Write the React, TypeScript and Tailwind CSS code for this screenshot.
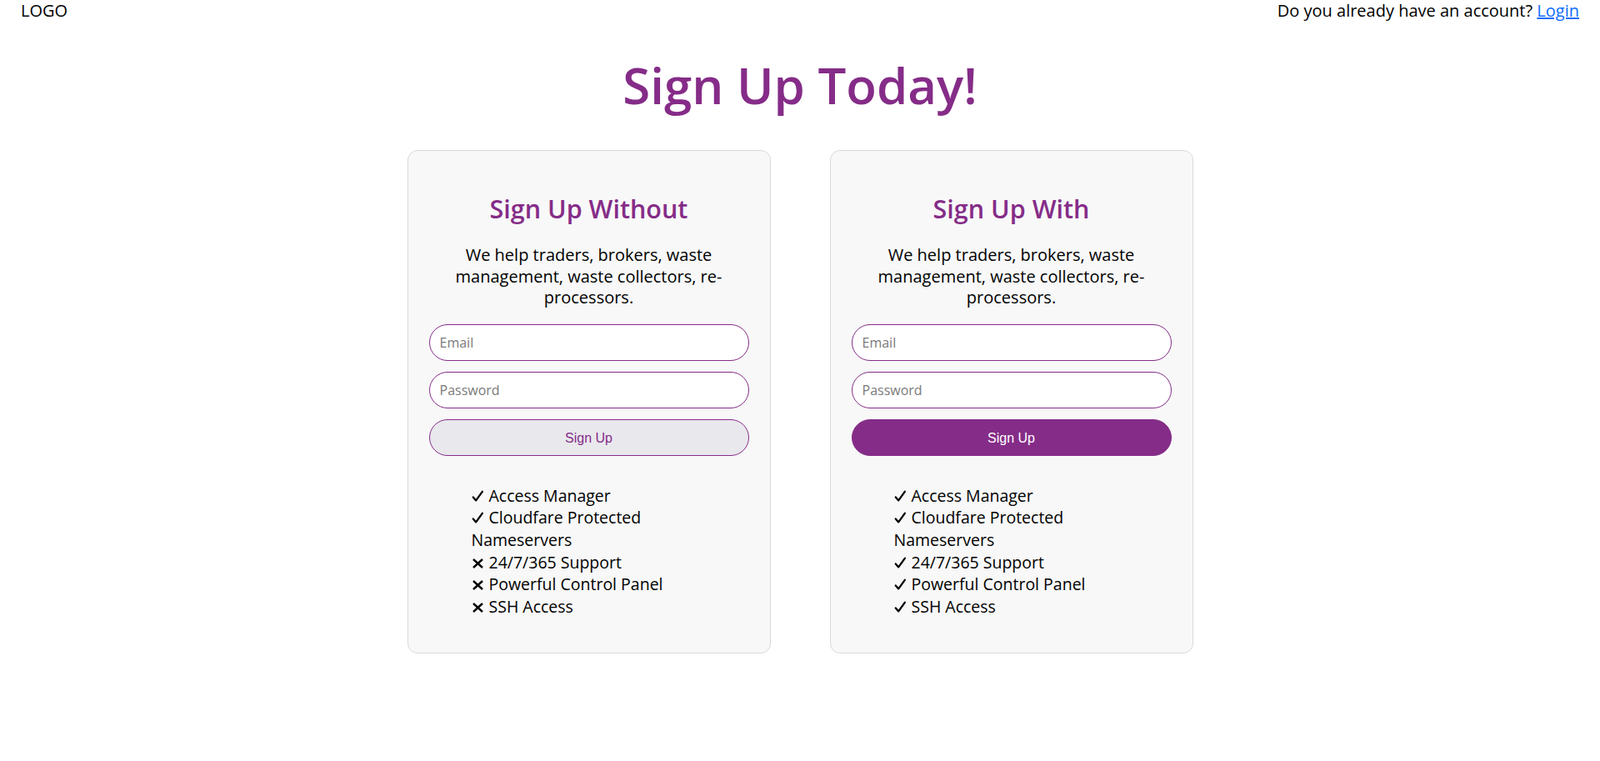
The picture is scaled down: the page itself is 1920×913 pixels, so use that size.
import React from "react";

type Feature = { ok: boolean; text: string };

const without: Feature[] = [
  { ok: true, text: "Access Manager" },
  { ok: true, text: "Cloudfare Protected Nameservers" },
  { ok: false, text: "24/7/365 Support" },
  { ok: false, text: "Powerful Control Panel" },
  { ok: false, text: "SSH Access" },
];

const withF: Feature[] = [
  { ok: true, text: "Access Manager" },
  { ok: true, text: "Cloudfare Protected Nameservers" },
  { ok: true, text: "24/7/365 Support" },
  { ok: true, text: "Powerful Control Panel" },
  { ok: true, text: "SSH Access" },
];

function CheckIcon() {
  return (
    <svg width="15" height="15" viewBox="0 0 15 15" className="inline-block align-[-1px] mr-[6px]">
      <path d="M1.8 8.4 L5.2 12.4 L12.8 1.8" fill="none" stroke="#000" strokeWidth="2.3" strokeLinecap="round" strokeLinejoin="round" />
    </svg>
  );
}

function CrossIcon() {
  return (
    <svg width="15" height="15" viewBox="0 0 15 15" className="inline-block align-[-1px] mr-[6px]">
      <path d="M2 3 L13 13 M13 3 L2 13" fill="none" stroke="#000" strokeWidth="2.4" strokeLinecap="butt" />
    </svg>
  );
}

function Card({ title, features, primary }: { title: string; features: Feature[]; primary: boolean }) {
  return (
    <div className="w-[436px] rounded-[12px] border border-[#d9d9d9] bg-[#f8f8f8] px-[25px] pt-[51px] pb-[41px]">
      <h2 className="text-center text-[30.5px] leading-[36px] font-semibold text-[#852c88]">{title}</h2>
      <p className="mx-auto mt-[25px] w-[340px] text-center text-[20px] leading-[25.5px] text-black">
        We help traders, brokers, waste management, waste collectors, re-processors.
      </p>
      <div className="mt-[19px] flex flex-col gap-[13px]">
        <input
          placeholder="Email"
          className="h-[44px] w-full rounded-full border border-[#852c88] bg-white px-[12px] text-[16px] text-black placeholder:text-[#7a7a7a] outline-none"
        />
        <input
          placeholder="Password"
          className="h-[44px] w-full rounded-full border border-[#852c88] bg-white px-[12px] text-[16px] text-black placeholder:text-[#7a7a7a] outline-none"
        />
        <button
          className={
            primary
              ? "h-[44px] w-full rounded-full border border-[#852c88] bg-[#852c88] pt-[2px] text-[16px] text-white [font-family:'Liberation_Sans',Arial,sans-serif]"
              : "h-[44px] w-full rounded-full border border-[#852c88] bg-[#e9e8ed] pt-[2px] text-[16px] text-[#852c88] [font-family:'Liberation_Sans',Arial,sans-serif]"
          }
        >
          Sign Up
        </button>
      </div>
      <ul className="mt-[35px] ml-[51px] w-[270px] text-[19.5px] leading-[26.7px] text-black">
        {features.map((f) => (
          <li key={f.text}>
            {f.ok ? <CheckIcon /> : <CrossIcon />}
            {f.text}
          </li>
        ))}
      </ul>
    </div>
  );
}

export default function App() {
  return (
    <div className="min-h-[913px] bg-white text-black [font-family:'Open_Sans','Noto_Sans',sans-serif]">
      <header className="flex items-start justify-between px-[25px] text-[20px] leading-[25px]">
        <div>LOGO</div>
        <div>
          Do you already have an account?{" "}
          <a href="#" className="text-[#0d6efd] underline">
            Login
          </a>
        </div>
      </header>
      <h1 className="mt-[42px] text-center text-[60px] leading-[70px] font-semibold text-[#852c88]">Sign Up Today!</h1>
      <main className="mt-[43px] flex justify-center gap-[71px]">
        <Card title="Sign Up Without" features={without} primary={false} />
        <Card title="Sign Up With" features={withF} primary={true} />
      </main>
    </div>
  );
}
